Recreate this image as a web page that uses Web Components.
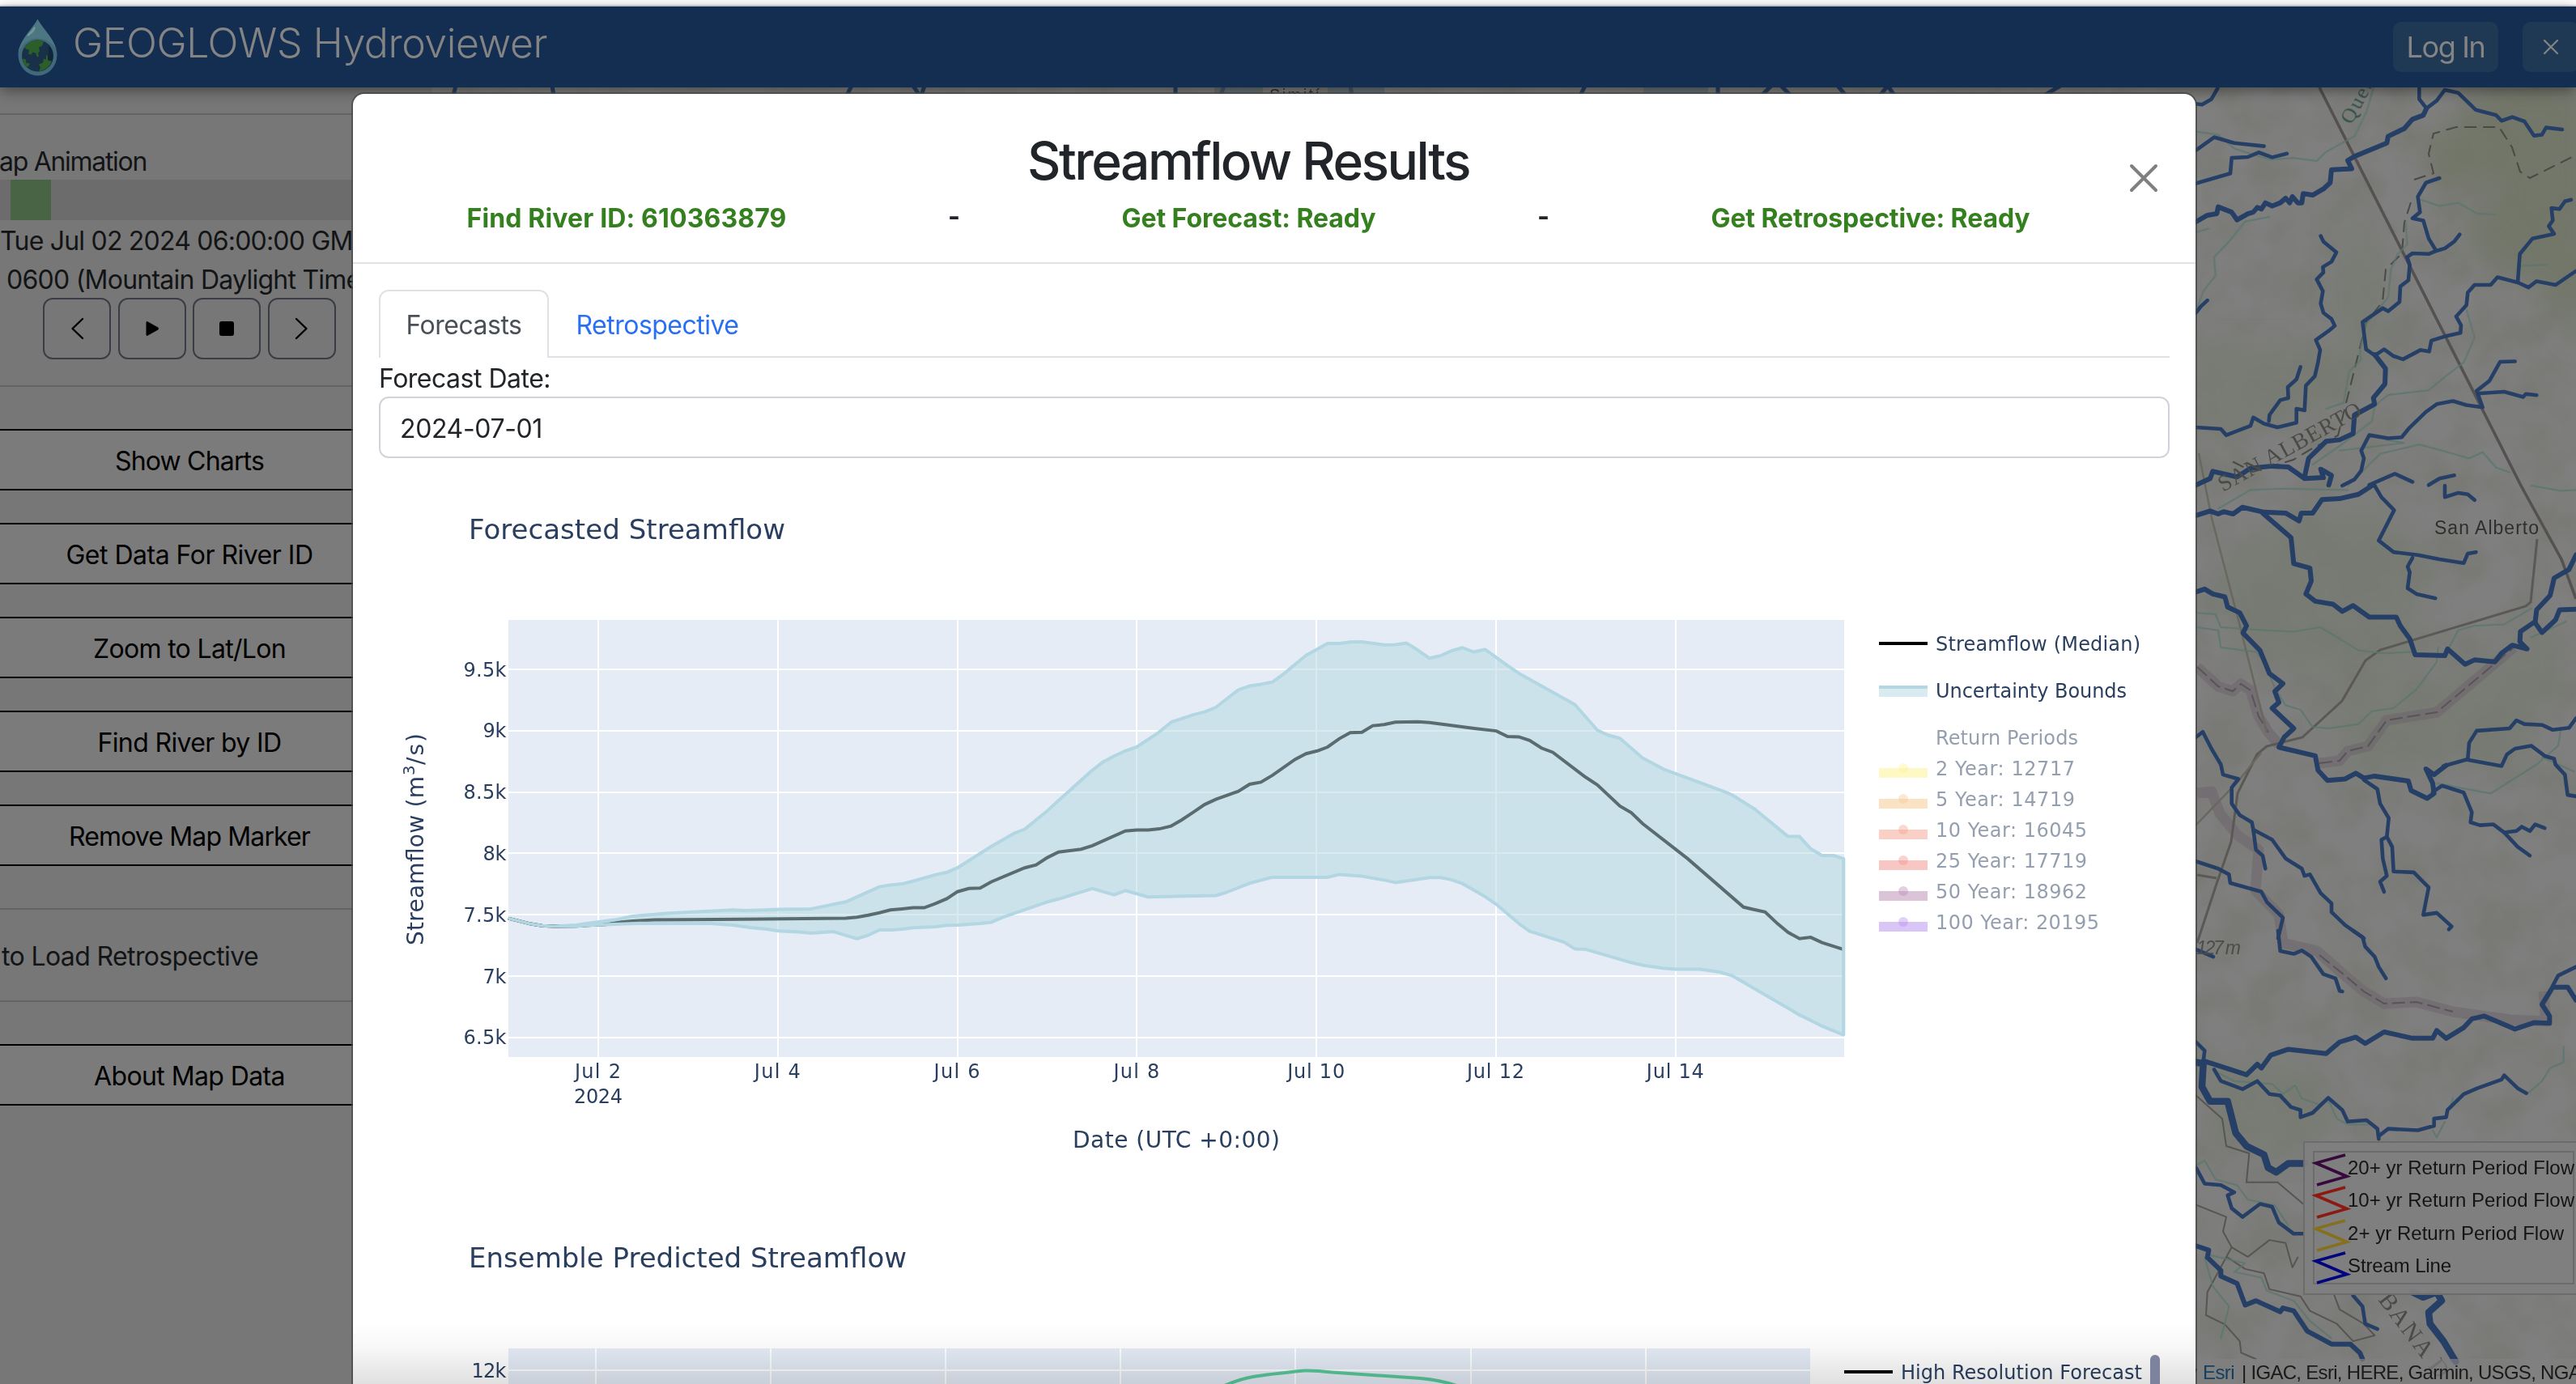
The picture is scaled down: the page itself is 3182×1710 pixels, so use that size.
<!DOCTYPE html>
<html lang="en">
<head>
<meta charset="utf-8">
<title>GEOGLOWS Hydroviewer</title>
<style>
html,body{margin:0;height:100%;overflow:hidden;background:#fff}
body{font-family:Inter,"Liberation Sans",sans-serif;font-size:32px;line-height:48px}
</style>
</head>
<body>
<hydro-app></hydro-app>
<script>
const define = (name, html, ready) => customElements.define(name, class extends HTMLElement {
  connectedCallback() {
    if (this.shadowRoot) return;
    const t = document.createElement('template');
    t.innerHTML = typeof html === 'function' ? html(this) : html;
    this.attachShadow({mode: 'open'}).appendChild(t.content.cloneNode(true));
    if (ready) ready(this);
  }
});

/* One line of text whose tracking is adjusted to a given advance width (attribute w). */
define('fit-text', `<style>:host{display:inline-block;white-space:nowrap}span{display:inline-block;transform:translateY(var(--drop,1.5px))}</style><span><slot></slot></span>`, el => {
  const span = el.shadowRoot.querySelector('span'), w = +el.getAttribute('w');
  const n = el.textContent.length;
  requestAnimationFrame(() => {
    const nat = span.getBoundingClientRect().width;
    if (w && nat) { span.style.letterSpacing = ((w - nat) / n).toFixed(3) + 'px'; }
  });
});

define('app-logo', `<style>:host{display:block;width:49px;height:71px}svg{display:block}</style>
<svg width="49" height="71" viewBox="22 22.500 49 71">
<path d="M46.500 23C43 32 22.500 50 22.500 67a24 26 0 0 0 48 0C70.500 50 50 32 46.500 23Z" fill="#41697b"/>
<path d="M46.500 23C43 32 24 49 23 64c9-22 34-22 46.500-4C66 46 50 32 46.500 23Z" fill="#4b7682"/>
<path d="M43 33c-4 6-9 11-8 10s7-4 8-10Z" fill="#75949c" stroke="#75949c" stroke-width="2"/>
<circle cx="46.500" cy="68.500" r="19.500" fill="#183149"/>
<path d="M60 55a19.500 19.500 0 0 1-12 33c10-8 13-20 12-33Z" fill="#112639"/>
<path d="M36 52c5-4 13-4 18-1l-2 5-4 2 1 5-2 2 1 4-2 1-2-5-4-1-1 3-4-1 1-5-4-1-2-2Z" fill="#2c5e29"/>
<path d="M28 72l4 1 0 4 5 1-2 4-3 0Q28 78 28 72ZM57 67l2 2 0 5 5 1q-3 10-16 13l2-5-2-4 5-2 1-5 3 1Z" fill="#2c5e29"/>
</svg>`);

define('app-header', `<style>
:host{display:block;flex:none;position:relative;z-index:2;--drop:0px}
.top{height:6px;background:#fff;border-bottom:2px solid #dcdfe0}
.bar{height:100px;background:#142e52;box-shadow:0 4px 16px rgba(0,0,0,.42);display:flex;align-items:center;box-sizing:border-box;padding-left:22px;color:#858484}
.t{font-size:50px;font-weight:350;line-height:60px;margin:-10px 0 0 19px;flex:1}
.b{height:62px;border-radius:10px;background:#1f3954;display:flex;align-items:center;justify-content:center}
.login{width:130px;font-size:36px}
.x{width:70px;margin-left:30px;margin-right:-4px;flex:none}
</style>
<div class="top"></div>
<div class="bar"><app-logo></app-logo><div class="t"><fit-text w="586">GEOGLOWS Hydroviewer</fit-text></div>
<div class="b login"><fit-text w="97">Log In</fit-text></div>
<div class="b x"><svg width="20" height="20" viewBox="0 0 20 20"><path d="M2 2 18 18M18 2 2 18" stroke="#858484" stroke-width="2.200" stroke-linecap="round"/></svg></div></div>`);

define('side-button', `<style>:host{display:flex;height:72px;margin-bottom:40px;border:solid #000;border-width:2px 0;background:#7b7b7b;align-items:center;justify-content:center;color:#000;width:468px}</style><slot></slot>`);
define('icon-button', `<style>:host{display:flex;width:80px;height:72px;border:2px solid #3a3e44;border-radius:12px;align-items:center;justify-content:center}</style><slot></slot>`);

define('side-bar', `<style>
:host{display:block;width:534px;flex:none;background:#777;color:#121416;overflow:hidden}
hr{border:0;height:2px;background:#616365;margin:32px 0}
hr.s{margin-bottom:52px}
.l{height:48px;white-space:nowrap}
.p{height:50px;background:#6c6c6c;display:flex;padding-left:13px}.p i{width:50px;background:#496345}
.c{display:flex;gap:8.700px;padding-left:53px}
hr.h{margin-top:52px}
</style>
<hr>
<div class="l"><fit-text w="182" style="margin-left:-1px">ap Animation</fit-text></div>
<div class="p"><i></i></div>
<div class="l"><fit-text w="467" style="margin-left:0">Tue Jul 02 2024 06:00:00 GMT-</fit-text></div>
<div class="l"><fit-text w="448" style="margin-left:8px">0600 (Mountain Daylight Time)</fit-text></div>
<div class="c">
<icon-button><svg width="32" height="32" viewBox="0 0 32 32"><path d="M23 4 10.500 16 23 28" fill="none" stroke="#000" stroke-width="2.400" stroke-linecap="round" stroke-linejoin="round"/></svg></icon-button>
<icon-button><svg width="32" height="32" viewBox="0 0 32 32"><path d="M8.500 8.800q0-2.500 2.200-1.400l12.500 7.200q1.800 1.400 0 2.800l-12.500 7.200q-2.200 1.100-2.200-1.400Z"/></svg></icon-button>
<icon-button><svg width="32" height="32" viewBox="0 0 32 32"><rect x="7" y="7" width="18" height="18" rx="3"/></svg></icon-button>
<icon-button><svg width="32" height="32" viewBox="0 0 32 32"><path d="M9 4 21.500 16 9 28" fill="none" stroke="#000" stroke-width="2.400" stroke-linecap="round" stroke-linejoin="round"/></svg></icon-button>
</div>
<hr class="s">
<side-button><fit-text w="184">Show Charts</fit-text></side-button>
<side-button><fit-text w="305">Get Data For River ID</fit-text></side-button>
<side-button><fit-text w="238">Zoom to Lat/Lon</fit-text></side-button>
<side-button><fit-text w="227">Find River by ID</fit-text></side-button>
<side-button><fit-text w="298">Remove Map Marker</fit-text></side-button>
<hr class="h">
<div class="l"><fit-text w="317" style="margin-left:2px">to Load Retrospective</fit-text></div>
<hr class="s">
<side-button><fit-text w="236">About Map Data</fit-text></side-button>`);

define('map-legend', `<style>
:host{position:absolute;left:2311px;top:1302px;width:360px;height:186px;border:2px solid #6c6c6c;background:rgba(128,128,128,.94);font:24px/41px "Liberation Sans",Arial,sans-serif;color:#141414;--drop:0px}
.in{margin:10px 10px;border:2px solid #6c6c6c;height:161px;width:319px;display:flex;flex-direction:column}
.r{height:41px;display:flex;white-space:nowrap}svg{flex:none;overflow:visible}span{margin-top:-2px;margin-left:-2px}
</style><div class="in"></div>`, el => {
  el.shadowRoot.querySelector('.in').innerHTML = [['#380a3c','20+ yr Return Period Flow',280],['#8c1a13','10+ yr Return Period Flow',280],['#84701f','2+ yr Return Period Flow',267],['#00047e','Stream Line',128]]
    .map(([c, t, w]) => `<div class="r"><svg width="43" height="40"><path d="M38 3 1.500 13 40 29.500 3 40" fill="none" stroke="${c}" stroke-width="3.600"/></svg><span><fit-text w="${w}">${t}</fit-text></span></div>`).join('');
});

define('map-attribution', `<style>
:host{position:absolute;left:2138px;bottom:0;height:31px;width:520px;background:rgba(128,128,128,.7);font:24px/33px "Liberation Sans",Arial,sans-serif;color:#1a1a1a;white-space:nowrap;overflow:hidden;display:flex;--drop:0px}
b{font-weight:400;color:#143f5f}.a{width:49px;text-align:right}.sp{width:9px}
</style><span class="a">by&nbsp;</span><b><fit-text w="39">Esri</fit-text></b><span class="sp"></span><fit-text w="419">| IGAC, Esri, HERE, Garmin, USGS, NGA</fit-text>`);

const A = 'translate(2660 0) scale(.33333 .38265)', B = 'translate(2660 600) scale(.33333 .35714)', C = 'translate(2660 1150) scale(.33333 .35714)';
const river = (t, w, list) => `<g transform="${t}" stroke-width="${w}">${list.map(p => `<polyline points="${p}"/>`).join('')}</g>`;
define('map-view', () => `<style>
:host{display:block;flex:1;position:relative;overflow:hidden;background:#7f7f7f}
svg{display:block}polyline{fill:none;vector-effect:non-scaling-stroke;stroke-linejoin:round;stroke-linecap:round}
</style>
<svg width="2648" height="1602" viewBox="534 108 2648 1602">
<defs>
<filter id="land" x="0" y="0" width="1" height="1" color-interpolation-filters="sRGB"><feTurbulence type="fractalNoise" baseFrequency=".018" numOctaves="3" seed="7"/><feColorMatrix values="0 0 0 0 .450  0 0 0 0 .460  0 0 0 0 .420  3 0 0 0 -1.100"/></filter>
<filter id="soft"><feGaussianBlur stdDeviation="16"/></filter>
</defs>
<rect x="534" y="108" width="2648" height="1602" filter="url(#land)" opacity=".42"/>
<g fill="#6f7463" filter="url(#soft)" opacity=".75">
<path d="M3080 100H3200V380L3110 345 3055 320 3040 280 3090 240 3000 210 3020 150Z"/><path d="M2980 170l60-10 40 50-40 30-40-20Z" opacity=".6"/><path d="M3130 350l60-20V430Z"/>
</g>
<g fill="#767a70" filter="url(#soft)" opacity=".65">
<path d="M2730 700l90-60 120-20 60 80-20 120-60 40-160-60ZM2890 240l50 80 0 130-50 40Z M2700 430h260l-60 60-190 60ZM2870 890l200-70 60-60 40 60-60 120-200 20ZM2720 1320l120-20 40 90-60 40-80-30Z"/>
</g>
<!-- department boundaries -->
<g stroke="#6f686e" stroke-width="13" fill="none" opacity=".65" stroke-linejoin="round">
<path d="M2714 824 2740 848 2758 854 2768 845 2780 853 2790 885 2802 905 2815 920M2865 943 2890 940 2900 928 2925 922 2948 890 3010 880 3040 855 3105 800"/>
<path d="M2714 980 2732 978 2742 1005 2764 1032 2790 1050 2786 1100 2815 1130 2820 1165 2862 1175 2895 1204 2920 1225 2945 1240 2985 1238 3030 1250 3100 1260 3145 1262 3142 1225"/>
</g>
<g stroke="#514d50" stroke-width="2" fill="none" stroke-dasharray="16 6" opacity=".8"><path d="M2714 824 2740 848 2758 854 2768 845 2780 853 2790 885 2802 905M2865 943 2890 940 2900 928 2925 922 2948 890 3010 880 3040 855 3105 800M2865 1180 2895 1204 2920 1225 2945 1240 2985 1238 3030 1250"/></g>
<!-- municipal boundaries -->
<g stroke="#4a4a45" stroke-width="2" fill="none" stroke-dasharray="15 8">
<path d="M2982 222l24-8 -6-24 6-25 28-8 53 0 16 25 10 30 12 8 60-30M2978 250l-8 25-3 38-20 20 -4 40-20 25-10 40-10 40-15 60-30 15-25 15-50 15-30-15"/></g>
<!-- roads -->
<g fill="none" stroke="#545150" stroke-width="3.600"><path d="M2865 108 3114 600 3164 691 3182 740"/></g>
<g fill="none" stroke="#5b5855" stroke-width="3"><path d="M3134 666 3126 744 3120 749 2940 803 2922 816 2893 866 2844 911 2800 922 2788 932 2764 980 2756 1040 2738 1092 2714 1165M2714 1081 2738 1085"/></g>
<g fill="none" stroke="#6a675f" stroke-width="2.500"><path d="M2716 560 2732 640 2766 770 2800 905M2793 930 2765 965 2712 1020"/></g>
<g transform="${C}" stroke="#575552" stroke-width="2" fill="none">
<polyline points="158,570 255,650 270,745 355,770 345,870 460,870 555,945"/><polyline points="158,948 270,990 258,1040 290,1095 350,1128 430,1070 490,1080 515,1165 535,1130"/><polyline points="290,1095 240,1180 200,1250 195,1330 265,1362 320,1420 325,1460 380,1482"/><polyline points="275,1130 340,1170 410,1185 430,1240 545,1265 580,1315 680,1360 740,1420 820,1400 780,1360 690,1310 670,1260"/></g>
<!-- minor streams -->
<g stroke="#5b776f" opacity=".85">
${river(A, 2, ["815,285 790,360 745,440 640,490 605,520 520,510 430,515 300,480 240,435 160,425","430,700 340,715 280,780 225,830 230,890 185,940 160,1000","158,750 205,738","990,645 1060,665 1130,655 1200,690 1265,692","935,715 940,790 905,820 880,870 870,960 785,1050 765,1140 770,1160 725,1200 705,1300 640,1320","1160,1000 1190,1090 1150,1170 1090,1210 1020,1260 870,1275 820,1310 810,1360 690,1440 590,1500","1320,1525 1270,1510 1220,1460 1170,1480 1090,1460 985,1435 840,1465 720,1568","1360,858 1460,855","860,1420 930,1430 690,1455"])}
${river(B, 2, ["160,440 230,445 250,490 350,497 520,505 620,490 690,530 760,570 860,580 960,575","160,490 240,500 250,560 380,575 410,610 450,700 490,760 545,775 590,835 650,840 760,825 810,780 890,770 975,705 1050,610 1055,560","1090,570 1130,500 1190,485 1300,480 1400,425","240,80 360,15 480,10 720,15","1050,1030 1250,1065 1420,965 1500,900 1510,840","1440,940 1490,960 1560,990","1400,525 1530,470","1400,0 1510,18 1566,15"])}
${river(C, 2, ["235,490 300,520 440,530 480,565 525,535 550,580 610,600 650,590 680,650 720,670 800,670","1385,565 1440,520 1470,475 1520,455 1520,400","1110,580 1100,610","1080,660 1050,715 1035,690","160,810 190,795 230,860 310,880 350,930 450,950 500,1020","200,1120 340,1150 300,1180 400,1200 420,1245 520,1280 580,1350 660,1410","190,1130 220,1230 280,1300 250,1410"])}
</g>
<!-- stream network -->
<g stroke="#263f66">
${river(A, 4.6, ["158,485 225,443 300,462 410,472","158,592 205,580 285,560 290,510 350,507 390,492 440,508 495,496","158,1010 175,990 200,970","158,335 180,338 215,320 238,285","620,762 630,780 678,815 660,845 628,862 630,880 605,902 628,940 620,980 630,1010 660,1030 672,1052 650,1068 602,1098 618,1130 610,1170 598,1215 565,1245 560,1325 530,1320 530,1365 460,1380 410,1368 370,1348 360,1375 330,1385 270,1405 250,1385 158,1380","428,1360 430,1340 470,1292 500,1285 498,1250 530,1225 545,1185","1060,575 1010,590 980,635 988,685 960,705 1000,712 1020,770 1048,810 1020,820 960,818 940,830 950,855 945,905 915,925 912,975 870,1005 850,995 775,1040 788,1128 825,1150","1048,810 1080,802 1115,780 1135,757","825,1145 855,1128 890,1150 925,1160 990,1130 1022,1135 1030,1100 1085,1085 1138,1075 1140,1050 1122,1022 1160,985 1165,945 1190,920 1250,920 1275,895 1350,912 1390,928 1420,908 1490,920 1566,875","1350,912 1358,820 1405,770 1485,755 1465,730 1480,712 1475,672 1505,675 1525,650 1548,645","985,285 985,320 1012,350","1012,350 1050,325 1080,290 1130,300 1195,355 1270,372 1290,390 1330,378 1375,392 1410,438 1440,435 1455,412 1515,418","1340,1167 1285,1168 1245,1230 1198,1262 1220,1315 1160,1308 1110,1295 1050,1305 1010,1330 945,1385 920,1412 870,1415 800,1405 770,1455 780,1480 770,1520 745,1548 700,1568","1210,1270 1300,1265 1370,1282 1380,1272 1420,1276","800,1566 895,1530 960,1556","1020,1566 1060,1545 1115,1535"])}
${river(A, 6, ["1012,350 1000,372 960,385 930,415 870,440 865,462 745,505 720,518 735,545 660,548 655,590 630,610 590,630 555,625 550,655 535,655 515,635 505,655 490,640 470,655 440,665 415,655 400,675 385,670 370,685 350,690 310,710 290,685 240,668 235,690 200,695 158,716","820,1145 860,1190 858,1240 815,1285 820,1305 745,1340 740,1400 690,1420 640,1425 575,1480 560,1540","158,1566 210,1545 220,1522 310,1540 360,1512 440,1505 500,1508 560,1545 630,1542 620,1515 660,1535 650,1566"])}
${river(B, 4.6, ["820,0 845,40 892,85 835,190 890,230 980,240 1060,255 1150,268 1165,235 1195,230","960,250 942,280 950,300 942,355 975,375 1045,390","1080,0 1080,40 1130,25 1165,30 1190,50","1165,945 1170,890 1198,848 1320,840 1345,812 1375,825 1440,828 1480,845 1540,838 1566,805","1075,970 1160,948 1290,970 1310,930 1340,910 1400,900 1450,935 1485,945 1490,965 1525,1000 1535,1070 1566,1075","1035,1060 1070,1038 1150,1062 1180,1130 1175,1165 1210,1175 1260,1172 1300,1200 1345,1195 1365,1180 1395,1195 1415,1172 1450,1185","1300,1200 1350,1250 1395,1280","780,1018 830,1050 840,1100 872,1150 865,1215 885,1250 890,1335 965,1338 1020,1390 1000,1485 1050,1478 1105,1525 1095,1535","865,1215 845,1225 850,1290 865,1350 840,1370 855,1405","158,870 183,852 215,910 250,965 258,1000 315,1015 290,1045 290,1100 320,1140 365,1165 370,1190 440,1225 490,1290 550,1325 560,1350 580,1345 620,1410 660,1445 660,1475 710,1520 780,1566","370,1190 380,1260 405,1280 415,1325","158,1300 240,1325 280,1345 285,1375 400,1405 420,1440 480,1495 462,1566"])}
${river(B, 6, ["158,103 210,88 240,98 260,90 295,98 330,75 410,92 490,95 540,122 548,95 590,95 625,48 690,45 760,30 810,0","405,95 510,180 520,270 580,285 585,330 565,375 600,400 665,410 700,435 740,415 800,455 900,455 915,485 950,530 970,585 1080,588 1090,565 1155,618 1190,603 1265,610 1290,580 1330,552 1385,565 1358,540 1360,505 1415,470 1420,430 1470,380 1485,320 1540,290 1566,240","158,368 190,358 220,375 265,385 275,420 320,440 345,485 332,510 395,570 430,650 480,685 450,712 465,750 440,770 520,840 485,870 465,905 600,935 610,985 645,1020 710,1015 750,995 780,1012 820,1005 945,1022 955,1055 1015,1082 1040,1065 1035,1030 1010,980 1040,1000 1085,968","1415,475 1440,508 1490,465 1505,430 1566,428"])}
${river(C, 4.6, ["462,0 470,70 520,80 550,68 585,90 630,150 675,165 690,208 700,210","740,0 775,22 785,55 820,90 835,125 862,165","158,65 222,90","158,385 190,415 185,450","225,480 250,520 330,548 385,520 430,565 470,570 510,610 545,620 545,645 590,630 648,578 700,620 720,660 790,655 830,685 835,720","835,710 870,685 980,690 1040,675 1040,650 1085,645 1090,620 1150,565 1200,545 1290,515 1300,500 1350,545 1382,562","1566,125 1500,155 1480,190","158,820 190,875 250,880 300,905 275,915 290,960 330,990 395,945 440,955 465,1010 520,1048 555,1048","740,1262 775,1300 785,1360 830,1378"])}
${river(C, 6, ["185,450 345,498 385,462 400,475 435,430 500,410 640,425 690,385 750,368 785,390 855,350 960,372 1035,372 1050,345 1085,372 1150,335 1180,305 1225,295 1340,340 1410,318 1468,320 1468,295 1440,255 1480,195 1535,195 1566,240","158,1090 205,1105 200,1130 250,1175 250,1195 310,1220 340,1295 380,1280 470,1318 480,1305 520,1315 570,1385 660,1430 730,1430 765,1460 775,1482"])}
${river(C, 8.5, ["158,455 185,460 180,540 210,590 275,590 305,700 345,745 410,775 425,820 455,835 500,805 560,805","960,1250 1000,1268 1050,1250 1068,1280 1020,1320 1025,1360 1075,1420 1120,1490"])}
<path d="M563 106l-3 12M682 106l2 12M1052 106l-6 12M1128 106l8 12M1142 106l-4 12M1452 106v12M1512 106l-4 12M1668 106l2 12M1958 106l-6 12M2122 106v12M2188 106l-12 12M2200 106l12 12M2270 106l10 12M2332 106l-10 12M2332 106l8 12M2545 106l-20 12" stroke-width="5" fill="none"/>
<path d="M1500 108h60v10h-60ZM1640 108h70v10h-70ZM2030 108h80v10h-80Z" fill="#55676f" stroke="none" opacity=".6"/>
</g>
<!-- place names -->
<g fill="#2f2f2f" font-family="Liberation Sans,Arial,sans-serif">
<text x="3007" y="660" font-size="23" textLength="129">San Alberto</text>
<text x="2713" y="1179" font-size="23" font-style="italic" fill="#4c4c4c" textLength="55">127 m</text>
<text x="1568" y="124" font-size="20" textLength="62">Simití</text>
</g>
<g fill="#4a4a47" font-family="Liberation Serif,Times,serif">
<text transform="translate(2746 608) rotate(-29)" font-size="28" textLength="198">SAN ALBERTO</text>
<text transform="translate(2937 1606) rotate(53)" font-size="30" textLength="124">BANA D</text>
<text transform="translate(2905 155) rotate(-62)" font-size="26" fill="#33524d" textLength="62">Queb</text>
</g>
</svg>
<map-legend></map-legend><map-attribution></map-attribution>`);

/* chart geometry: data is stored in sampled plot units and projected to chart pixels */
const L = s => s.split(' ').map(p => p.split(',').map(Number));
const proj = (a, b) => [...L(a).map(([x, y]) => [460 + x / 1.6505, 740 + y / 2.3059]), ...L(b).map(([x, y]) => [1400 + x / 1.6505, 740 + y / 2.3059])].map(p => p.map(v => v.toFixed(1)).join(','));
const head = '277,910 300,918 323,926 346,931 370,933 ';
const med = proj(head + '415,932 438,930 480,927 500,922 530,918 575,914 700,913 965,910 988,907 1011,901 1034,894 1056,886 1080,883 1102,880 1125,880 1148,868 1171,854 1193,834 1216,825 1239,824 1262,806 1330,766 1353,758 1376,737 1399,721 1422,717 1445,713 1468,703 1535,661 1558,658',
'30,658 53,655 77,647 98,630 122,608 145,586 168,571 214,548 237,528 260,522 283,503 330,457 352,441 375,433 396,422 420,398 442,381 466,380 488,361 511,358 534,351 580,350 604,352 695,369 740,376 763,392 786,393 808,403 832,425 855,437 922,508 946,530 992,590 1015,609 1038,640 1130,740 1244,878 1265,885 1288,892 1313,925 1335,950 1358,968 1381,964 1404,979 1448,999');
const up = proj(head + '415,929 440,924 500,913 530,904 600,896 735,886 760,888 800,886 830,884 895,883 965,863 1034,820 1056,815 1080,812 1102,804 1148,786 1171,779 1193,766 1262,705 1308,668 1330,656 1376,604 1399,574 1422,545 1468,488 1490,464 1512,448 1535,433 1558,422',
'52,380 77,351 122,330 145,322 168,309 214,259 237,248 260,243 283,237 307,213 330,186 352,161 396,127 420,127 442,123 466,122 511,131 534,130 557,126 580,146 604,169 626,162 648,148 671,139 694,151 717,144 763,190 786,212 900,301 946,374 968,388 992,397 1038,453 1084,487 1205,549 1220,558 1267,599 1335,677 1358,677 1381,712 1404,731 1427,731 1448,740');
const low = proj(head + '415,933 440,930 545,924 690,925 735,929 770,936 805,941 828,946 870,949 895,952 940,948 988,968 1011,958 1034,943 1060,943 1080,941 1102,937 1148,934 1171,930 1193,929 1239,925 1262,921 1285,907 1376,863 1399,855 1445,835 1468,825 1512,843 1535,831 1558,840',
'30,849 168,845 190,836 237,810 283,793 396,793 420,785 466,790 511,801 534,808 604,794 626,794 648,800 671,811 717,848 740,870 786,925 808,947 878,978 900,997 922,998 1015,1036 1040,1044 1080,1052 1105,1055 1155,1055 1195,1063 1220,1073 1358,1185 1404,1217 1448,1242');
const chartStyle = `<style>:host{display:block;height:900px;flex:none}svg{display:block}text{font-family:"DejaVu Sans",Verdana,sans-serif;font-size:24px;fill:#2a3f5f}.m{text-anchor:middle}.e{text-anchor:end}.big{font-size:34px}.ax{font-size:28px}.off{opacity:.5}</style>`;

define('forecast-chart', () => `${chartStyle}
<svg width="2212" height="900" viewBox="468 566 2212 900">
<text class="big" x="579" y="666" textLength="391">Forecasted Streamflow</text>
<rect x="628" y="766" width="1650" height="540" fill="#e5ecf6"/>
<g stroke="#fff" stroke-width="2">${[0,1,2,3,4,5,6].map(i => `<path d="M${739 + Math.round(i * 221.8)} 766V1306"/>`).join('')}</g>
<g stroke="#fff" stroke-width="2">${[0,1,2,3,4,5,6].map(i => `<path d="M628 ${Math.round(827 + i * 75.8)}H2278"/>`).join('')}</g>
<polyline points="${med.join(' ')}" fill="none" stroke="#000" stroke-width="4"/>
<polygon points="${[...up, ...[...low].reverse()].join(' ')}" fill="#b4d7dd" fill-opacity=".5"/>
<polyline points="${[...up, ...[...low].reverse()].join(' ')}" fill="none" stroke="#b2d6e2" stroke-width="4" stroke-linejoin="round"/>
${['9.5k','9k','8.5k','8k','7.5k','7k','6.5k'].map((t, i) => `<text class="e" x="625.500" y="${835.5 + i * 75.8}" textLength="${t.length > 2 ? 53 : 29}">${t}</text>`).join('')}
${[2,4,6,8,10,12,14].map((d, i) => `<text class="m" x="${738.5 + i * 221.8}" y="1332" textLength="${d < 10 ? 57 : 71}">Jul ${d}</text>`).join('')}
<text class="m" x="739" y="1363" textLength="60">2024</text>
<text class="ax m" x="1453" y="1418" textLength="256">Date (UTC +0:00)</text>
<text class="ax" transform="translate(523 1168) rotate(-90)" textLength="209">Streamflow (m</text>
<text transform="translate(512 958) rotate(-90)" style="font-size:19.600px">3</text>
<text class="ax" transform="translate(523 945) rotate(-90)" textLength="39">/s)</text>
<path d="M2321 795h60" stroke="#000" stroke-width="4"/>
<text x="2391" y="804" textLength="253">Streamflow (Median)</text>
<path d="M2321 849h60v12h-60Z" fill="#d9eaf0"/><path d="M2321 849h60" stroke="#b2d6e2" stroke-width="4"/>
<text x="2391" y="862" textLength="236">Uncertainty Bounds</text>
<text class="off" x="2391" y="920" textLength="176">Return Periods</text>
${[['2 Year: 12717','#fef38a',172],['5 Year: 14719','#f6c78c',172],['10 Year: 16045','#f39f8e',187],['25 Year: 17719','#f19087',187],['50 Year: 18962','#b789b1',187],['100 Year: 20195','#b58cef',202]].map(([t, c, w], i) => `<rect x="2321" y="${949 + i * 38}" width="60" height="12" fill="${c}" fill-opacity=".5"/><circle cx="2351" cy="${949 + i * 38}" r="6" fill="${c}" fill-opacity=".4"/><text class="off" x="2391" y="${958 + i * 38}" textLength="${w}">${t}</text>`).join('')}
</svg>`);

define('ensemble-chart', () => `${chartStyle}
<svg width="2212" height="900" viewBox="468 1466 2212 900">
<text class="big" x="579" y="1566" textLength="541">Ensemble Predicted Streamflow</text>
<rect x="628" y="1666" width="1608" height="540" fill="#e5ecf6"/>
<path d="${[0,1,2,3,4,5,6].map(i => `M${Math.round(736 + i * 216.1)} 1666V2206`).join('')}M628 1693H2236" stroke="#fff" stroke-width="2"/>
<path d="M1508 1714Q1530 1704 1548 1701T1611 1693.500Q1625 1693 1645 1695.500L1755 1703Q1780 1705 1802 1713" fill="none" stroke="#58c89a" stroke-width="4"/>
<text class="e" x="625.500" y="1702" textLength="43">12k</text>
<path d="M2278 1695h60" stroke="#000" stroke-width="4"/>
<text x="2348" y="1704" textLength="298">High Resolution Forecast</text>
</svg>`);

define('results-modal', `<style>
:host{position:absolute;z-index:3;left:436px;top:116px;width:2276px;height:1594px;background:#fff;border-radius:14px 14px 0 0;box-shadow:0 0 0 2px rgba(70,70,70,.75);color:#212529;display:flex;flex-direction:column;overflow:hidden}
header{height:208px;border-bottom:2px solid #dee2e6;display:flex;flex:none}
.c{width:2212px;padding-top:42px;display:flex;flex-direction:column;align-items:center;gap:9px}
h1{margin:0;font-size:64px;line-height:77px;font-weight:500}
.s{display:flex;gap:199.500px;font-weight:700;color:#34801f}.s i{font-style:normal;color:#212529}
header svg{margin:86px 0 0 -18px;flex:none}
main{padding:32px 32px 0;display:flex;flex-direction:column;min-height:0;flex:1}
nav{display:flex;height:82px;border-bottom:2px solid #dee2e6;flex:none}
.tab{height:80px;padding-bottom:2px;border:2px solid #dee2e6;border-bottom:0;border-radius:12px 12px 0 0;background:#fff;color:#495057;width:206px;display:flex;align-items:center;justify-content:center;margin-bottom:-2px}
.tab+.tab{border-color:transparent;background:none;color:#286ff6;width:264px}
label{display:block;height:48px;flex:none}
.in{height:48px;padding:12px 24px;border:2px solid #ced4da;border-radius:12px;flex:none}
.bar{position:absolute;left:2220px;top:1558px;width:12px;height:60px;border-radius:6px;background:#7d839c}
.shade{position:absolute;left:0;right:0;bottom:0;height:75px;background:linear-gradient(rgba(0,0,0,0),rgba(0,0,0,.03) 40%,rgba(0,0,0,.12))}
</style>
<header><div class="c"><h1><fit-text w="546">Streamflow Results</fit-text></h1>
<div class="s"><fit-text w="395">Find River ID: 610363879</fit-text><i>-</i><fit-text w="314">Get Forecast: Ready</fit-text><i>-</i><fit-text w="394">Get Retrospective: Ready</fit-text></div></div>
<svg width="36" height="36" viewBox="0 0 36 36"><path d="M3 3 33 33M33 3 3 33" stroke="#7f7f7f" stroke-width="4" stroke-linecap="round"/></svg></header>
<main><nav><div class="tab"><fit-text w="143">Forecasts</fit-text></div><div class="tab"><fit-text w="201">Retrospective</fit-text></div></nav>
<label><fit-text w="212">Forecast Date:</fit-text></label><div class="in"><fit-text w="176">2024-07-01</fit-text></div>
<forecast-chart></forecast-chart><ensemble-chart></ensemble-chart></main>
<div class="shade"></div><div class="bar"></div>`);

define('hydro-app', `<style>:host{display:flex;flex-direction:column;width:3182px;height:1710px;position:relative;overflow:hidden}.m{display:flex;flex:1;min-height:0}</style>
<app-header></app-header><div class="m"><side-bar></side-bar><map-view></map-view></div><results-modal></results-modal>`);
</script>
</body>
</html>
